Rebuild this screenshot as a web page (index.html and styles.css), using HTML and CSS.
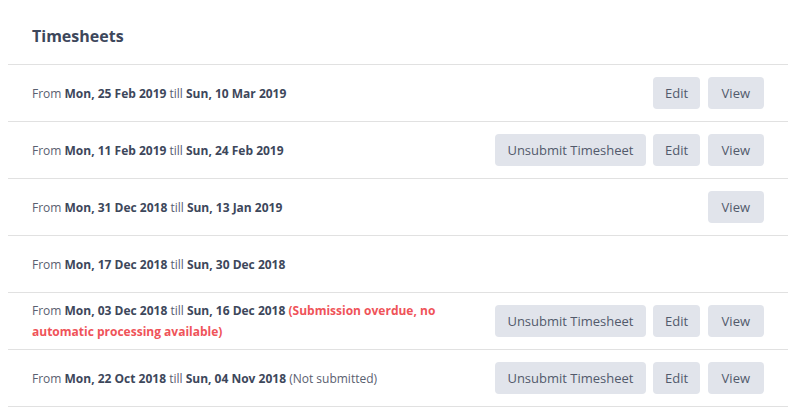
FILE: index.html
```html
<!DOCTYPE html>
<html>
<head>
<meta charset="utf-8">
<link rel="stylesheet" href="styles.css">
</head>
<body>
<div class="panel">
  <div class="header"><h2 class="title">Timesheets</h2></div>
  <div class="row">
    <div class="text">From <b>Mon, 25 Feb 2019</b> till <b>Sun, 10 Mar 2019</b></div>
    <div class="actions"><button class="btn">Edit</button><button class="btn btn-view">View</button></div>
  </div>
  <div class="row">
    <div class="text">From <b>Mon, 11 Feb 2019</b> till <b>Sun, 24 Feb 2019</b></div>
    <div class="actions"><button class="btn">Unsubmit Timesheet</button><button class="btn">Edit</button><button class="btn btn-view">View</button></div>
  </div>
  <div class="row">
    <div class="text">From <b>Mon, 31 Dec 2018</b> till <b>Sun, 13 Jan 2019</b></div>
    <div class="actions"><button class="btn btn-view">View</button></div>
  </div>
  <div class="row">
    <div class="text">From <b>Mon, 17 Dec 2018</b> till <b>Sun, 30 Dec 2018</b></div>
    <div class="actions"></div>
  </div>
  <div class="row">
    <div class="text">From <b>Mon, 03 Dec 2018</b> till <b>Sun, 16 Dec 2018</b> <b class="warn">(Submission overdue, no automatic processing available)</b></div>
    <div class="actions"><button class="btn">Unsubmit Timesheet</button><button class="btn">Edit</button><button class="btn btn-view">View</button></div>
  </div>
  <div class="row">
    <div class="text">From <b>Mon, 22 Oct 2018</b> till <b>Sun, 04 Nov 2018</b> (Not submitted)</div>
    <div class="actions"><button class="btn">Unsubmit Timesheet</button><button class="btn">Edit</button><button class="btn btn-view">View</button></div>
  </div>
</div>
</body>
</html>
```
FILE: styles.css
```css
html, body { margin: 0; padding: 0; background: #fff; }
body { padding: 8px; font-family: "Open Sans", "Noto Sans", sans-serif; }
.panel { background: #fff; }
.header { padding: 16px 24px; border-bottom: 1px solid #e1e1e1; }
.title { margin: 0; font-size: 16px; line-height: 24px; font-weight: 700; color: #3d475b; }
.row { display: flex; align-items: center; justify-content: space-between; gap: 40px; min-height: 42px; padding: 7px 24px; border-bottom: 1px solid #e1e1e1; }
.text { font-size: 12px; line-height: 21px; color: #5a6070; }
.text b { font-weight: 700; color: #3d475b; }
.text b.warn { color: #ef5359; }
.actions { display: flex; gap: 7.5px; flex-shrink: 0; }
.btn { font-family: "Open Sans", "Noto Sans", sans-serif; font-size: 13px; height: 32px; padding: 0 12px; border: none; border-radius: 4px; background: #e1e4eb; color: #525a6b; cursor: pointer; }
.btn-view { padding: 0 14px; }
```
